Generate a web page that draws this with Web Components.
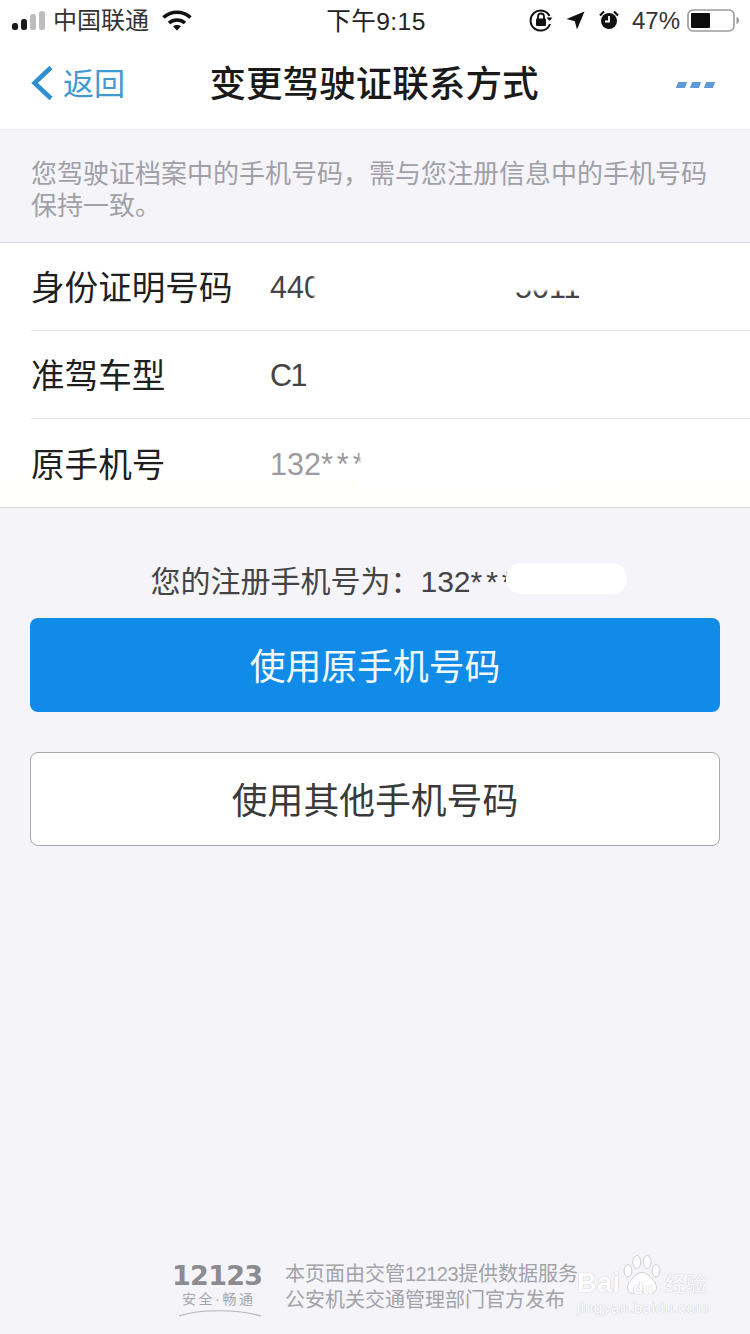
<!DOCTYPE html>
<html lang="zh-CN">

<head>
  <meta charset="UTF-8">
  <title>变更驾驶证联系方式</title>
  <style>
    html, body { margin: 0; padding: 0; }
    body { width: 750px; background: #f4f4f9; font-family: "Liberation Sans", "Noto Sans CJK SC", sans-serif; }
  </style>
</head>

<body>
  <license-page>
    <status-bar slot="top"></status-bar>
    <nav-bar slot="top" title="变更驾驶证联系方式"></nav-bar>
    <notice-text slot="top">您驾驶证档案中的手机号码&#xFF0C;需与您注册信息中的手机号码保持一致。</notice-text>
    <info-list slot="top">
      <info-row label="身份证明号码">
        <span style="display:inline-block;width:245px">440</span>5011
        <redact-mask style="left:44px;top:-8px;width:100px;height:50px"></redact-mask>
        <redact-mask style="left:130px;top:-8px;width:190px;height:29px"></redact-mask>
      </info-row>
      <info-row label="准驾车型"><span style="letter-spacing:-1.5px">C1</span></info-row>
      <info-row label="原手机号" muted last>
        132<span style="letter-spacing:4px">***</span>
        <redact-mask style="left:90px;top:-8px;width:200px;height:50px"></redact-mask>
      </info-row>
    </info-list>
    <phone-line slot="top" prefix="您的注册手机号为&#xFF1A;" digits="132" stars="***"></phone-line>
    <action-button slot="top" primary>使用原手机号码</action-button>
    <action-button slot="top">使用其他手机号码</action-button>
    <page-footer slot="bottom"></page-footer>
  </license-page>

  <script>
    const cjk = '"Liberation Sans", "Noto Sans CJK SC", sans-serif';

    // every element gets its shadow root the same way
    class Base extends HTMLElement {
      render(html) {
        this.attachShadow({ mode: "open" }).innerHTML = html;
      }
    }

    class LicensePage extends Base {
      constructor() {
        super();
        this.render(`<style>
          :host { display: flex; flex-direction: column; justify-content: space-between; height: 1334px; overflow: hidden; font-family: ${cjk}; }
          .top { display: flex; flex-direction: column; }
        </style>
        <div class="top"><slot name="top"></slot></div>
        <slot name="bottom"></slot>`);
      }
    }

    class StatusBar extends Base {
      constructor() {
        super();
        this.render(`<style>
          :host { display: flex; align-items: center; height: 40px; background: #fff; color: #1b1b1b; font-size: 24px; }
          .left { display: flex; align-items: center; padding-left: 12px; flex: 1; }
          .left span { margin: -4px 0 0 8px; color: #333; }
          .left .wifi { margin-left: 13px; }
          .time { font-size: 24.600px; letter-spacing: .4px; color: #222; width: 100px; text-align: center; margin-top: -3px; white-space: nowrap; }
          .right { flex: 1; display: flex; align-items: center; justify-content: flex-end; padding-right: 10px; box-sizing: border-box; }
          .pct { font-size: 24px; color: #333; margin: 2px 7px 0 13px; }
          svg { display: block; }
        </style>
        <div class="left">
          <svg width="33" height="21" viewBox="0 0 33 21">
            <rect x="0" y="13" width="6" height="7" rx="2.5" fill="#1a1a1a"/>
            <rect x="9" y="9" width="6" height="11" rx="2.5" fill="#1a1a1a"/>
            <rect x="18" y="4" width="6" height="16" rx="2.5" fill="#bdbdbd"/>
            <rect x="27" y="1" width="6" height="19" rx="2.5" fill="#bdbdbd"/>
          </svg>
          <span>中国联通</span>
          <svg class="wifi" width="30" height="21" viewBox="0 0 30 21">
            <path d="M1.5 7.5C9 .5 21 .5 28.5 7.5" fill="none" stroke="#111" stroke-width="3.6"/>
            <path d="M7 13c4.600-4 11.400-4 16 0" fill="none" stroke="#111" stroke-width="3.6"/>
            <path d="M11 16.300c2.400-1.900 5.600-1.900 8 0L15 20.500z" fill="#111"/>
          </svg>
        </div>
        <div class="time">下午9:15</div>
        <div class="right">
          <svg width="24" height="24" viewBox="0 0 24 24">
            <path d="M20.500 8A10 10 0 1 0 21 16" fill="none" stroke="#111" stroke-width="2"/>
            <path d="M17.500 9.500h6l-3 3.500z" fill="#111"/>
            <rect x="7" y="10.500" width="10" height="7.500" rx="1" fill="#111"/>
            <path d="M9 11V8.500a3 3 0 0 1 6 0V11" fill="none" stroke="#111" stroke-width="1.800"/>
          </svg>
          <svg style="margin-left:13px" width="19" height="19" viewBox="0 0 19 19">
            <path d="M18.500.5L11 18.500 8.800 10.200.5 8z" fill="#111"/>
          </svg>
          <svg style="margin-left:14px" width="20" height="20" viewBox="0 0 20 20">
            <circle cx="10" cy="11" r="8" fill="#111"/>
            <path d="M10 6v5.500H6" fill="none" stroke="#fff" stroke-width="1.800"/>
            <path d="M1 5.500L5 1.500M19 5.500L15 1.500" stroke="#111" stroke-width="2.200"/>
          </svg>
          <span class="pct">47%</span>
          <svg width="53" height="23" viewBox="0 0 53 23">
            <rect x="1" y="1" width="46" height="21" rx="5" fill="none" stroke="#9a9a9a" stroke-width="1.600"/>
            <rect x="4" y="4" width="19" height="15" rx="1" fill="#0c0c0c"/>
            <path d="M49.500 8c2 .5 2.500 2 2.500 3.500S51.500 14.500 49.500 15z" fill="#9a9a9a"/>
          </svg>
        </div>`);
      }
    }

    class NavBar extends Base {
      constructor() {
        super();
        this.render(`<style>
          :host { display: flex; align-items: center; height: 90px; background: #fff; box-sizing: border-box; padding-bottom: 6px; border-bottom: 1px solid #ececf0; }
          .back { display: flex; align-items: center; width: 150px; padding-left: 30px; box-sizing: border-box; color: #3f9ad2; font-size: 31px; }
          .back svg { margin: 2px 9px 0 0; display: block; }
          h1 { flex: 1; margin: 0 2px 0 0; text-align: center; font-size: 36.600px; font-weight: 500; color: #1a1a1a; white-space: nowrap; }
          .more { width: 150px; display: flex; justify-content: flex-end; gap: 5px; padding-right: 36px; box-sizing: border-box; }
          .more i { display: block; width: 9px; height: 6px; background: #5e9bd6; transform: skewX(-20deg); margin-top: 6px; }
        </style>
        <div class="back">
          <svg width="24" height="36" viewBox="0 0 24 36"><path d="M21 2.500L4.500 18 21 33.500" fill="none" stroke="#2f8fd0" stroke-width="4.500"/></svg>
          <span>返回</span>
        </div>
        <h1>${this.getAttribute("title")}</h1>
        <div class="more"><i></i><i></i><i></i></div>`);
      }
    }

    class NoticeText extends Base {
      constructor() {
        super();
        this.render(`<style>
          :host { display: block; padding: 28px 31px 20px; font-size: 26px; line-height: 32px; color: #a0a0a6; border-bottom: 1px solid #dcdcdf; }
        </style><slot></slot>`);
      }
    }

    class InfoList extends Base {
      constructor() {
        super();
        this.render(`<style>
          :host { display: block; background: linear-gradient(#fff 235px, #fffffb 235px); border-bottom: 1px solid #dcdcdf; }
        </style><slot></slot>`);
      }
    }

    class InfoRow extends Base {
      constructor() {
        super();
        const muted = this.hasAttribute("muted");
        const last = this.hasAttribute("last");
        this.render(`<style>
          :host { display: block; margin-left: 31px; }
          .row { display: flex; align-items: center; box-sizing: border-box; height: 88px; padding-bottom: 2px; ${last ? "" : "border-bottom: 1px solid #e2e2e4;"} }
          .label { width: 239px; font-size: 33.600px; color: #1f1f1f; white-space: nowrap; }
          .val { position: relative; margin-top: 4px; font-size: 30.500px; color: ${muted ? "#9b9b9f" : "#444"}; white-space: nowrap; }
        </style>
        <div class="row"><div class="label">${this.getAttribute("label")}</div><div class="val"><slot></slot></div></div>`);
      }
    }

    // white smudge from the screenshot's redaction, lies over the digits
    class RedactMask extends Base {
      constructor() {
        super();
        this.render(`<style>
          :host { display: block; position: absolute; background: #fff; filter: blur(1px); }
        </style>`);
      }
    }

    class PhoneLine extends Base {
      constructor() {
        super();
        this.render(`<style>
          :host { display: flex; justify-content: center; padding-top: 56px; height: 110px; box-sizing: border-box; font-size: 30px; line-height: 36px; color: #444; white-space: nowrap; }
          .stars { letter-spacing: 4px; }
          .hidden { display: inline-block; width: 82px; position: relative; }
          .pill { position: absolute; left: -12px; top: -1px; width: 121px; height: 31px; background: #fff; border-radius: 16px; }
        </style>
        <span>${this.getAttribute("prefix")}${this.getAttribute("digits")}<span class="stars">${this.getAttribute("stars")}</span></span><span class="hidden"><span class="pill"></span></span>`);
      }
    }

    class ActionButton extends Base {
      constructor() {
        super();
        const primary = this.hasAttribute("primary");
        this.render(`<style>
          :host { display: flex; align-items: center; justify-content: center; height: 94px; margin: 0 30px ${primary ? 40 : 0}px; padding-bottom: 3px; box-sizing: border-box; border-radius: 8px; font-size: 35.800px;
            background: ${primary ? "#108be8" : "#fff"}; color: ${primary ? "#f4f9fd" : "#3a3a3a"}; border: ${primary ? "none" : "1px solid #a9a9ad"}; }
        </style><slot></slot>`);
      }
    }

    class PageFooter extends Base {
      constructor() {
        super();
        this.render(`<style>
          :host { display: flex; position: relative; height: 80px; padding: 10px 0 0 172px; box-sizing: border-box; }
          .logo { width: 113px; display: flex; flex-direction: column; color: #8b8b90; }
          .num { font: bold 27px/24px "DejaVu Sans", sans-serif; letter-spacing: -.7px; height: 26px; }
          .slogan { font-size: 14px; line-height: 18px; letter-spacing: 2.600px; color: #a5a5aa; padding-left: 10px; white-space: nowrap; }
          .logo svg { display: block; margin: 0 0 0 5px; }
          .txt { font-size: 20px; line-height: 26px; color: #a2a2a7; white-space: nowrap; margin-top: -3px; }
          .txt span { letter-spacing: -.5px; }
          .mark { position: absolute; left: 577px; top: 1px; width: 135px; height: 72px; color: #fff; text-shadow: 0 0 1px #c4c4ca, 0 0 1px #c4c4ca; }
          .mark svg { position: absolute; left: 45px; top: 0; }
          .bai { position: absolute; left: 0; top: 13px; font-size: 27px; line-height: 30px; font-weight: bold; letter-spacing: .5px; }
          .du { position: absolute; left: 56px; top: 24px; font-size: 16px; line-height: 20px; font-weight: bold; }
          .jy { position: absolute; left: 88px; top: 14px; font-size: 21px; line-height: 30px; white-space: nowrap; }
          .url { position: absolute; left: 0; top: 44px; font-size: 15.500px; line-height: 18px; letter-spacing: .4px; white-space: nowrap; }
        </style>
        <div class="logo">
          <div class="num">12123</div>
          <div class="slogan">安全·畅通</div>
          <svg width="86" height="10" viewBox="0 0 86 10"><path d="M2 8C22 1 62 1 84 8" fill="none" stroke="#b5b5ba" stroke-width="1.200"/></svg>
        </div>
        <div class="txt">本页面由交管<span>12123</span>提供数据服务<br>公安机关交通管理部门官方发布</div>
        <div class="mark">
          <svg width="40" height="42" viewBox="0 0 44 48" fill="#fff" stroke="#c6c6cb" stroke-width="1">
            <path d="M22 20c6 0 9 5 13 9 5 5 5 15-3 15-4 0-7-2-10-2s-6 2-10 2c-8 0-8-10-3-15 4-4 7-9 13-9z"/>
            <ellipse cx="6" cy="18" rx="4.500" ry="7"/>
            <ellipse cx="16" cy="8" rx="4.500" ry="7.500"/>
            <ellipse cx="28" cy="8" rx="4.500" ry="7.500"/>
            <ellipse cx="38" cy="18" rx="4.500" ry="7"/>
          </svg>
          <span class="bai">Bai</span><span class="du">du</span><span class="jy">经验</span>
          <span class="url">jingyan.baidu.com</span>
        </div>`);
      }
    }

    customElements.define("license-page", LicensePage);
    customElements.define("status-bar", StatusBar);
    customElements.define("nav-bar", NavBar);
    customElements.define("notice-text", NoticeText);
    customElements.define("info-list", InfoList);
    customElements.define("info-row", InfoRow);
    customElements.define("redact-mask", RedactMask);
    customElements.define("phone-line", PhoneLine);
    customElements.define("action-button", ActionButton);
    customElements.define("page-footer", PageFooter);
  </script>
</body>

</html>
